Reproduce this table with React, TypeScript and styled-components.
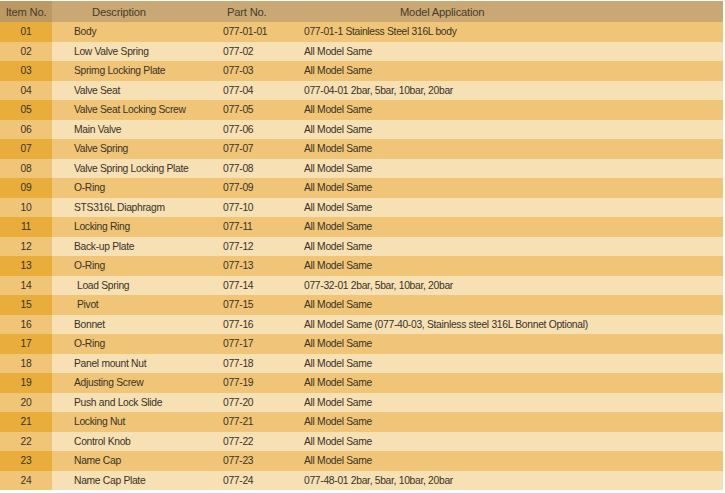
import React from "react";
import styled, { createGlobalStyle } from "styled-components";

const GlobalStyle = createGlobalStyle`
  body {
    margin: 0;
    background: #ffffff;
    font-family: "Liberation Sans", Arial, sans-serif;
  }
`;

const Page = styled.div`
  padding-top: 1px;
  width: 723px;
`;

const Table = styled.table`
  width: 723px;
  border-collapse: collapse;
  table-layout: fixed;
  font-size: 10.3px;
  letter-spacing: -0.3px;
  color: #3a3226;
`;

const HeadCell = styled.th<{ $first?: boolean; $pad: number }>`
  height: 21px;
  padding: 0 0 0 ${(p) => p.$pad}px;
  background: ${(p) => (p.$first ? "#bc9862" : "#caa874")};
  font-weight: normal;
  font-size: 11.2px;
  letter-spacing: -0.2px;
  color: #453c2e;
  text-align: ${(p) => (p.$first ? "center" : "left")};
  white-space: nowrap;
`;

const Row = styled.tr<{ $odd: boolean }>`
  height: 19.5px;
  background: ${(p) => (p.$odd ? "#f0c577" : "#f6e0b4")};
`;

const ItemCell = styled.td<{ $odd: boolean }>`
  padding: 0;
  text-align: center;
  background: ${(p) => (p.$odd ? "#e9ad3b" : "#f0c577")};
`;

const Cell = styled.td<{ $pad: number }>`
  padding: 0 0 0 ${(p) => p.$pad}px;
  white-space: nowrap;
`;

type Part = [string, string, string, string];

const parts: Part[] = [
  ["01", "Body", "077-01-01", "077-01-1 Stainless Steel 316L body"],
  ["02", "Low Valve Spring", "077-02", "All Model Same"],
  ["03", "Sprimg Locking Plate", "077-03", "All Model Same"],
  ["04", "Valve Seat", "077-04", "077-04-01 2bar, 5bar, 10bar, 20bar"],
  ["05", "Valve Seat Locking Screw", "077-05", "All Model Same"],
  ["06", "Main Valve", "077-06", "All Model Same"],
  ["07", "Valve Spring", "077-07", "All Model Same"],
  ["08", "Valve Spring Locking Plate", "077-08", "All Model Same"],
  ["09", "O-Ring", "077-09", "All Model Same"],
  ["10", "STS316L Diaphragm", "077-10", "All Model Same"],
  ["11", "Locking Ring", "077-11", "All Model Same"],
  ["12", "Back-up Plate", "077-12", "All Model Same"],
  ["13", "O-Ring", "077-13", "All Model Same"],
  ["14", " Load Spring", "077-14", "077-32-01 2bar, 5bar, 10bar, 20bar"],
  ["15", " Pivot", "077-15", "All Model Same"],
  ["16", "Bonnet", "077-16", "All Model Same (077-40-03, Stainless steel 316L Bonnet Optional)"],
  ["17", "O-Ring", "077-17", "All Model Same"],
  ["18", "Panel mount Nut", "077-18", "All Model Same"],
  ["19", "Adjusting Screw", "077-19", "All Model Same"],
  ["20", "Push and Lock Slide", "077-20", "All Model Same"],
  ["21", "Locking Nut", "077-21", "All Model Same"],
  ["22", "Control Knob", "077-22", "All Model Same"],
  ["23", "Name Cap", "077-23", "All Model Same"],
  ["24", "Name Cap Plate", "077-24", "077-48-01 2bar, 5bar, 10bar, 20bar"],
];

const App = () => {
  return (
    <Page>
      <GlobalStyle />
      <Table>
        <colgroup>
          <col style={{ width: 52 }} />
          <col style={{ width: 152 }} />
          <col style={{ width: 81 }} />
          <col />
        </colgroup>
        <thead>
          <tr>
            <HeadCell $first $pad={0}>Item No.</HeadCell>
            <HeadCell $pad={40}>Description</HeadCell>
            <HeadCell $pad={23}>Part No.</HeadCell>
            <HeadCell $pad={115}>Model Application</HeadCell>
          </tr>
        </thead>
        <tbody>
          {parts.map(([no, desc, part, model], i) => {
            const odd = i % 2 === 0;
            const indent = desc.startsWith(" ") ? 3 : 0;
            return (
              <Row key={no} $odd={odd}>
                <ItemCell $odd={odd}>{no}</ItemCell>
                <Cell $pad={22 + indent}>{desc.trim()}</Cell>
                <Cell $pad={19}>{part}</Cell>
                <Cell $pad={19}>{model}</Cell>
              </Row>
            );
          })}
        </tbody>
      </Table>
    </Page>
  );
};

export default App;
